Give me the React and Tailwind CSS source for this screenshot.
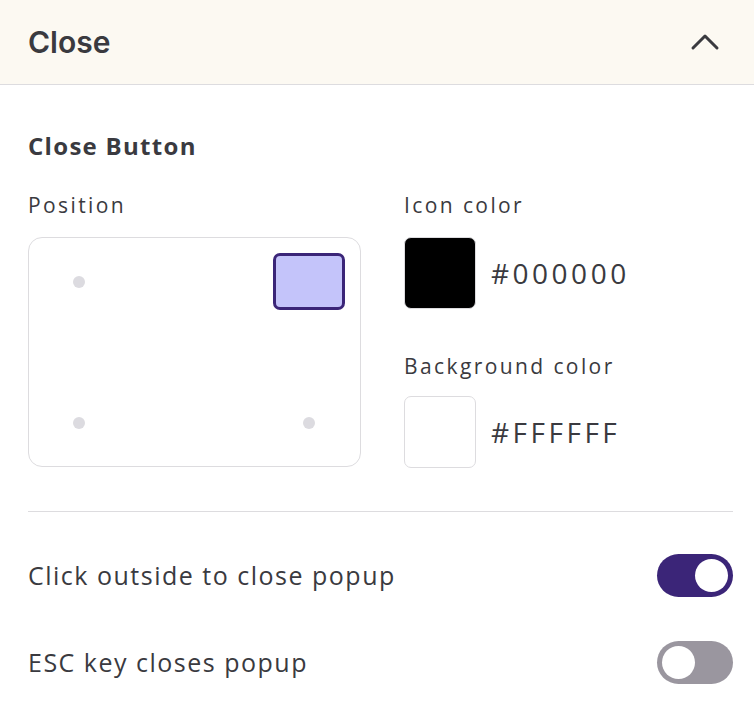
import { useState } from 'react';

const BODY = { fontFamily: '"Open Sans", "Liberation Sans", sans-serif' };

function Toggle({ on, onChange }) {
  return (
    <button
      onClick={() => onChange(!on)}
      className={`flex h-[43px] w-[76px] shrink-0 items-center rounded-full px-[5px] ${on ? 'justify-end bg-[#3b2578]' : 'justify-start bg-[#9a969f]'}`}
    >
      <span className="h-[33px] w-[33px] rounded-full bg-white" />
    </button>
  );
}

function Swatch({ color, label }) {
  return (
    <div className="flex items-center gap-[15px]">
      <div className="h-[72px] w-[72px] rounded-[7px] border border-[#dddcdf]" style={{ background: color }} />
      <span className="text-[28px] tracking-[3.5px] text-[#3a3a40]">{label}</span>
    </div>
  );
}

export default function App() {
  const [clickOutside, setClickOutside] = useState(true);
  const [escKey, setEscKey] = useState(false);

  return (
    <div className="min-h-screen bg-white" style={BODY}>
      {/* Header */}
      <div className="flex h-[85px] items-center justify-between border-b border-[#dddcdf] bg-[#fcf9f2] pl-[28px] pr-[34px]">
        <h1 className="text-[30px] font-semibold text-[#3a3a3f]" style={{ fontFamily: 'Inter, sans-serif' }}>Close</h1>
        <svg width="30" height="18" viewBox="0 0 30 18" fill="none" stroke="#3a3a3f" strokeWidth="3" strokeLinecap="round" strokeLinejoin="round">
          <path d="M3 15 L15 3 L27 15" />
        </svg>
      </div>

      <div className="px-[28px] pt-[46px]">
        <h2 className="text-[24px] font-bold leading-[30px] tracking-[1.3px] text-[#3a3a40]">Close Button</h2>

        <div className="mt-[31px] flex gap-[43px]">
          {/* Position */}
          <div className="w-[333px]">
            <p className="text-[21px] leading-[26px] tracking-[2.4px] text-[#3a3a40]">Position</p>
            <div className="mt-[19px] grid h-[230px] grid-cols-2 grid-rows-2 rounded-[14px] border border-[#dddcdf] px-[15px] py-[15px]">
              <div className="flex items-start justify-start">
                <span className="ml-[29px] mt-[23px] h-[12px] w-[12px] rounded-full bg-[#dcdbe0]" />
              </div>
              <div className="flex items-start justify-end">
                <span className="h-[57px] w-[72px] rounded-[7px] border-[3px] border-[#3b2578] bg-[#c4c4fa]" />
              </div>
              <div className="flex items-end justify-start">
                <span className="mb-[22px] ml-[29px] h-[12px] w-[12px] rounded-full bg-[#dcdbe0]" />
              </div>
              <div className="flex items-end justify-end">
                <span className="mb-[22px] mr-[30px] h-[12px] w-[12px] rounded-full bg-[#dcdbe0]" />
              </div>
            </div>
          </div>

          {/* Colors */}
          <div className="flex-1">
            <p className="text-[21px] leading-[26px] tracking-[2.4px] text-[#3a3a40]">Icon color</p>
            <div className="mt-[19px]">
              <Swatch color="#000000" label="#000000" />
            </div>
            <p className="mt-[44px] text-[21px] leading-[26px] tracking-[2.4px] text-[#3a3a40]">Background color</p>
            <div className="mt-[17px]">
              <Swatch color="#ffffff" label="#FFFFFF" />
            </div>
          </div>
        </div>

        <div className="mr-[-7px] mt-[43px] border-t border-[#dddcdf]" />

        <div className="mr-[-7px] mt-[42px] flex items-center justify-between">
          <span className="text-[25px] tracking-[1.5px] text-[#3a3a40]">Click outside to close popup</span>
          <Toggle on={clickOutside} onChange={setClickOutside} />
        </div>
        <div className="mr-[-7px] mt-[44px] flex items-center justify-between">
          <span className="text-[25px] tracking-[1.5px] text-[#3a3a40]">ESC key closes popup</span>
          <Toggle on={escKey} onChange={setEscKey} />
        </div>
      </div>
    </div>
  );
}
